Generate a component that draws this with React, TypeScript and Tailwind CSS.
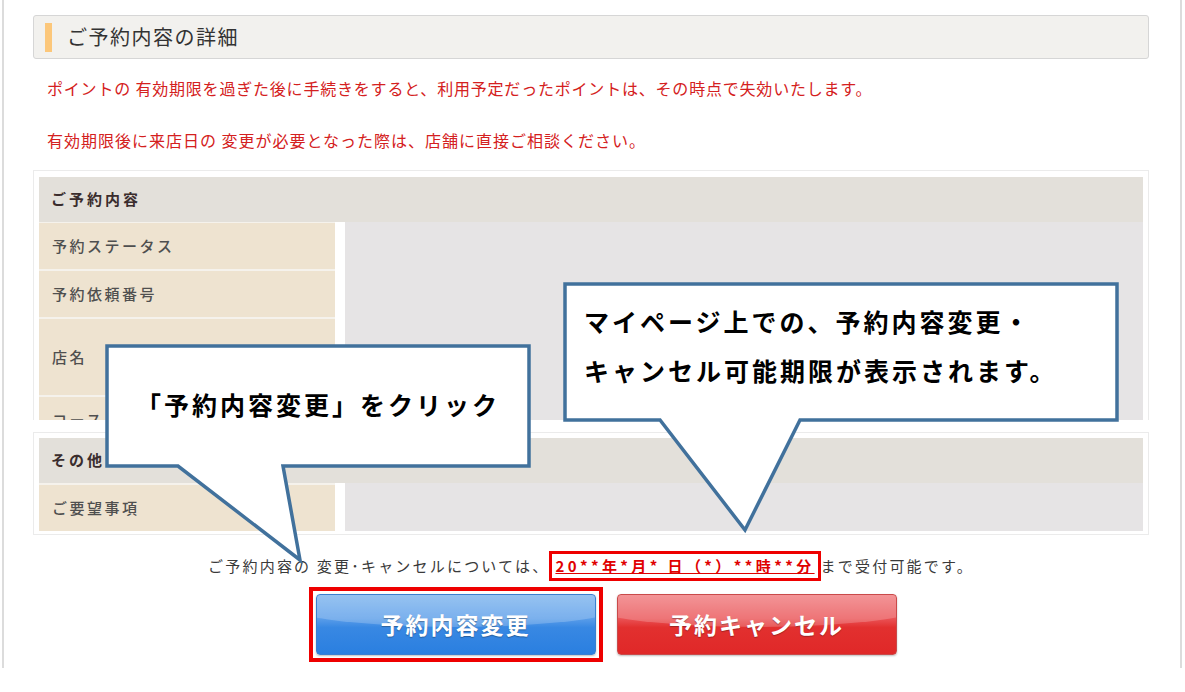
import React from "react";

const jp = { fontFamily: '"Noto Sans CJK JP", "Noto Sans", sans-serif' };

interface LabelRowProps {
  label: string;
  h: number;
}

const LabelRow = ({ label, h }: LabelRowProps) => (
  <div
    className="flex items-center bg-[#eee3d0] pl-[13px] text-[15px] font-medium tracking-[2.5px] text-[#4f4f4f]"
    style={{ height: h }}
  >
    {label}
  </div>
);

const GlossButton = ({ text, tone }: { text: string; tone: "blue" | "red" }) => {
  const base =
    tone === "blue"
      ? "bg-[linear-gradient(180deg,#7cb4ee_0%,#5a9de9_40%,#3888e3_55%,#2a7fe0_100%)] border-[#3a7fd0]"
      : "bg-[linear-gradient(180deg,#f07a7d_0%,#ea5255_40%,#e2302f_55%,#e02828_100%)] border-[#c94a4a]";
  return (
    <div
      className={`relative flex h-[61px] w-[280px] items-center justify-center overflow-hidden rounded-[4px] border ${base} shadow-[0_1px_2px_rgba(0,0,0,0.25)]`}
    >
      <div className="absolute left-[-15%] top-[-20px] h-[52px] w-[130%] rounded-b-[50%] bg-white/20" />
      <span className="relative text-[23px] font-bold tracking-[2px] text-white [text-shadow:0_1px_1px_rgba(0,0,0,0.3)]">
        {text}
      </span>
    </div>
  );
};

export default function App() {
  return (
    <div className="relative h-[692px] w-[1185px] overflow-hidden bg-white" style={jp}>
      <div className="ml-[2px] h-[668px] w-[1180px] border-x-2 border-[#dcdcdc] pl-[29px] pt-[15px]">
        <div className="w-[1116px]">
          {/* heading */}
          <div className="flex h-[44px] items-center rounded-[3px] border border-[#d6d6d6] bg-[#f2f1ee] pl-[11px]">
            <div className="h-[29px] w-[7px] bg-[#fcc77a]" />
            <span className="ml-[15px] text-[20px] tracking-[1.5px] text-[#333]">ご予約内容の詳細</span>
          </div>

          <p className="mt-[19px] h-[20px] pl-[14px] text-[16px] leading-[20px] tracking-[0.8px] text-[#d42020]">
            ポイントの 有効期限を過ぎた後に手続きをすると、利用予定だったポイントは、その時点で失効いたします。
          </p>
          <p className="mt-[32px] h-[20px] pl-[14px] text-[16px] leading-[20px] tracking-[1px] text-[#d42020]">
            有効期限後に来店日の 変更が必要となった際は、店舗に直接ご相談ください。
          </p>

          {/* table 1 (clipped) */}
          <div className="mt-[20px] h-[250px] overflow-hidden border border-b-0 border-[#ebebeb] px-[5px] pt-[6px]">
            <div className="flex h-[45px] items-center bg-[#e3e0da] pl-[12px] text-[15px] font-bold tracking-[3px] text-[#3a2d2d]">
              ご予約内容
            </div>
            <div className="flex">
              <div className="flex w-[296px] flex-col gap-[2px] bg-[#f5f2ec] pt-[1px]">
                <LabelRow label="予約ステータス" h={46} />
                <LabelRow label="予約依頼番号" h={46} />
                <LabelRow label="店名" h={76} />
                <LabelRow label="コース" h={46} />
              </div>
              <div className="w-[10px] bg-white" />
              <div className="flex-1 bg-[#e6e4e5]" />
            </div>
          </div>

          {/* table 2 */}
          <div className="mt-[12px] border border-[#ebebeb] px-[5px] pb-[3px] pt-[5px]">
            <div className="flex h-[45px] items-center bg-[#e3e0da] pl-[12px] text-[15px] font-bold tracking-[3px] text-[#3a2d2d]">
              その他
            </div>
            <div className="flex">
              <div className="flex w-[296px] flex-col bg-[#f5f2ec] pt-[2px]">
                <LabelRow label="ご要望事項" h={46} />
              </div>
              <div className="w-[10px] bg-white" />
              <div className="flex-1 bg-[#e6e4e5]" />
            </div>
          </div>

          {/* deadline line */}
          <div className="mt-[16px] flex items-center justify-center text-[15px] tracking-[2.2px] text-[#3a3a3a]">
            <span>ご予約内容の 変更･キャンセルについては、</span>
            <span className="border-[3px] border-[#ee0000] px-[3px] text-[15px] font-bold leading-[24px] tracking-[3.4px] text-[#e00000] underline">
              20**年*月* 日（*）**時**分
            </span>
            <span>まで受付可能です。</span>
          </div>

          {/* buttons */}
          <div className="mt-[6px] flex items-center justify-center gap-[14px] pl-[23px]">
            <div className="border-[4px] border-[#ee0000] p-[3px]">
              <GlossButton text="予約内容変更" tone="blue" />
            </div>
            <GlossButton text="予約キャンセル" tone="red" />
          </div>
        </div>
      </div>

      {/* callouts */}
      <svg className="pointer-events-none absolute inset-0" width="1185" height="692">
        <path
          d="M107 346 L529 346 L529 466 L283 466 L300 560 L178 466 L107 466 Z"
          fill="#fff"
          stroke="#41719c"
          strokeWidth="3.5"
          strokeLinejoin="miter"
        />
        <path
          d="M565 284 L1117 284 L1117 420 L800 420 L745 530 L660 420 L565 420 Z"
          fill="#fff"
          stroke="#41719c"
          strokeWidth="3.5"
          strokeLinejoin="miter"
        />
      </svg>
      <div className="absolute left-[136px] top-[388px] text-[25px] font-bold leading-[32px] tracking-[3px] text-black">
        「予約内容変更」をクリック
      </div>
      <div className="absolute left-[584px] top-[297px] text-[25px] font-bold leading-[49px] tracking-[3px] text-black">
        <div>マイページ上での、予約内容変更・</div>
        <div>キャンセル可能期限が表示されます。</div>
      </div>
    </div>
  );
}
